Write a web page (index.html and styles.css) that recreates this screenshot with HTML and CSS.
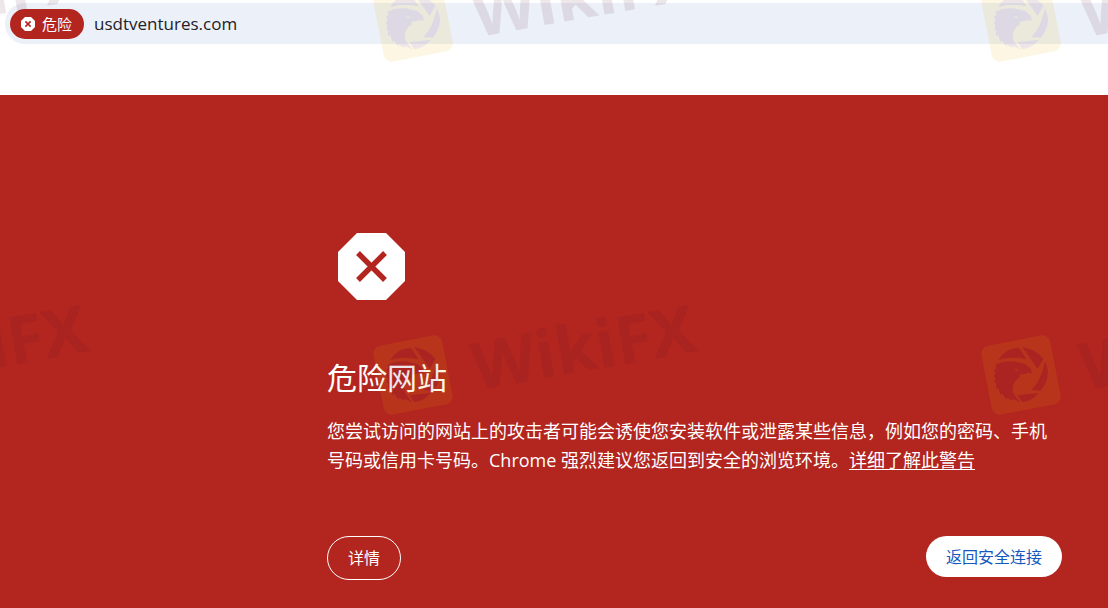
FILE: index.html
```html
<!DOCTYPE html>
<html lang="zh-CN">
<head>
<meta charset="utf-8">
<meta name="viewport" content="width=device-width, initial-scale=1">
<title>危险网站</title>
<link rel="stylesheet" href="styles.css">
</head>
<body>
<header class="toolbar">
  <div class="address-bar">
    <button class="danger-chip" type="button">
      <svg class="chip-icon" viewBox="0 0 14 14" aria-hidden="true">
        <path fill="#fff" d="M4 0h6l4 4v6l-4 4H4l-4-4V4z"/>
        <path stroke="#b3251f" stroke-width="1.6" d="M4.4 4.4l5.2 5.2M9.6 4.4L4.4 9.6"/>
      </svg>
      <span>危险</span>
    </button>
    <span class="url">usdtventures.com</span>
  </div>
</header>
<main class="warning">
  <svg class="warning-icon" viewBox="0 0 67 67" aria-hidden="true">
    <path fill="#fff" d="M19 0h29l19 19v29L48 67H19L0 48V19z"/>
    <path stroke="#b3251f" stroke-width="5.4" d="M20 20l27 27M47 20L20 47"/>
  </svg>
  <h1 class="title">危险网站</h1>
  <p class="message">您尝试访问的网站上的攻击者可能会诱使您安装软件或泄露某些信息，例如您的密码、手机号码或信用卡号码。Chrome 强烈建议您返回到安全的浏览环境。<a class="learn-more" href="#">详细了解此警告</a></p>
  <div class="actions">
    <button class="button button-outline" type="button">详情</button>
    <button class="button button-solid" type="button">返回安全连接</button>
  </div>
</main>
<svg class="watermarks" aria-hidden="true">
  <defs>
    <g id="mark">
      <g opacity="0.11">
        <rect x="-35" y="-35" width="70" height="70" rx="8" fill="#e6b400" transform="rotate(-11)"/>
        <g transform="scale(.3333) translate(-184 -195)" fill="#6a1e40">
          <path d="M116 150Q136 114 178 113L201 148Q158 138 116 150z"/>
          <path d="M188 112Q226 116 251 146L234 177z"/>
          <path d="M256 154Q278 202 243 242L216 240Q245 210 256 154z"/>
          <path d="M237 249Q216 274 188 277L174 256Q205 252 237 249z"/>
          <path fill-rule="evenodd" d="M108 163Q145 147 180 158Q200 160 203 169Q216 173 216 191L207 188Q194 194 178 193Q185 204 172 208Q154 226 161 250L181 277L159 266L160 273L142 263L140 269L128 251L122 254L116 235L109 236L110 220L104 217L107 205L102 197L108 188L103 180L110 175zM162 178L178 179L170 184z"/>
        </g>
      </g>
      <text class="wordmark" x="60" y="26" transform="rotate(-10)">WikiFX</text>
    </g>
  </defs>
  <use href="#mark" x="-195" y="22"/>
  <use href="#mark" x="413" y="22"/>
  <use href="#mark" x="1021" y="22"/>
  <use href="#mark" x="-195" y="375"/>
  <use href="#mark" x="413" y="375"/>
  <use href="#mark" x="1021" y="375"/>
</svg>
</body>
</html>
```
FILE: styles.css
```css
* {
  box-sizing: border-box;
}

body {
  margin: 0;
  min-height: 100vh;
  display: flex;
  flex-direction: column;
  position: relative;
  overflow-x: hidden;
  background: #fff;
  font-family: "Open Sans", "Noto Sans CJK SC", sans-serif;
}

button {
  font-family: inherit;
  cursor: pointer;
}

.toolbar {
  padding: 3px 0 51px 5px;
}

.address-bar {
  display: flex;
  align-items: center;
  gap: 10px;
  height: 41px;
  padding-left: 5px;
  border-radius: 20px 0 0 20px;
  background: #ebf0f9;
}

.danger-chip {
  display: flex;
  align-items: center;
  gap: 7px;
  height: 30px;
  padding: 0 12px 0 11px;
  border: 0;
  border-radius: 15px;
  background: #b3251f;
  color: #fff;
  font-size: 15px;
  line-height: 20px;
}

.chip-icon {
  width: 14px;
  height: 14px;
}

.url {
  color: #1f2124;
  font-size: 17px;
  line-height: 24px;
}

.warning {
  flex: 1;
  padding: 138px 46px 28px 327px;
  background: #b3251f;
  color: #fff;
}

.warning-icon {
  display: block;
  width: 67px;
  height: 67px;
  margin-left: 11px;
}

.title {
  margin: 56px 0 17px;
  font-size: 30px;
  font-weight: 400;
  line-height: 44px;
}

.message {
  margin: 0;
  font-size: 18px;
  line-height: 29px;
}

.learn-more {
  color: inherit;
  text-underline-offset: 2px;
}

.actions {
  display: flex;
  align-items: flex-start;
  justify-content: space-between;
  margin-top: 61px;
}

.button {
  padding: 0 20px;
  border-radius: 22px;
  font-size: 16px;
  line-height: 24px;
}

.button-outline {
  height: 44px;
  border: 1px solid #fff;
  background: transparent;
  color: #fff;
}

.button-solid {
  height: 41px;
  border: 0;
  background: #fff;
  color: #1558c0;
}

.watermarks {
  position: absolute;
  inset: 0;
  width: 100%;
  height: 100%;
  pointer-events: none;
}

.wordmark {
  fill: #5a1430;
  fill-opacity: 0.1;
  font-family: "Open Sans", sans-serif;
  font-size: 66px;
  font-weight: 700;
}
```
